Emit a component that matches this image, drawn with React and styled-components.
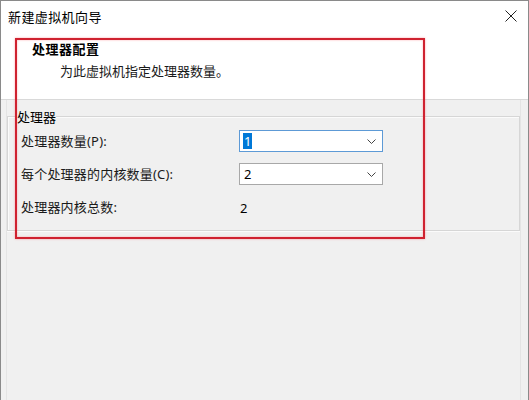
import React from 'react';
import styled, { createGlobalStyle, css } from 'styled-components';

const GlobalStyle = createGlobalStyle`
  html, body {
    margin: 0;
    padding: 0;
    background: #f0f0f0;
  }
  body {
    font-family: "Noto Sans", "Noto Sans CJK SC", sans-serif;
    font-size: 13px;
    color: #000;
  }
`;

const Window = styled.div`
  position: relative;
  height: 400px;
  box-sizing: border-box;
  border: 1px solid #8a8a8a;
  border-bottom: none;
  background: #f0f0f0;
  display: flex;
  flex-direction: column;
  overflow: hidden;
`;

const TitleBar = styled.div`
  height: 32px;
  background: #fff;
  display: flex;
  align-items: center;
  justify-content: space-between;
  padding: 0 11px 2px 7px;
  box-sizing: border-box;
`;

const Title = styled.span`
  font-family: "Noto Sans CJK SC", sans-serif;
  font-size: 13px;
  letter-spacing: 0.4px;
  line-height: 17px;
`;

const CloseButton = styled.button`
  border: none;
  background: transparent;
  padding: 0;
  width: 13px;
  height: 13px;
  display: flex;
  align-items: center;
  justify-content: center;
`;

const Header = styled.div`
  height: 67px;
  box-sizing: border-box;
  background: #fff;
  border-bottom: 1px solid #d9d9d9;
  padding: 7px 0 0 31px;
`;

const HeaderTitle = styled.div`
  font-family: "Noto Sans CJK SC", sans-serif;
  font-weight: 700;
  font-size: 13px;
  line-height: 17px;
  letter-spacing: 0.5px;
`;

const HeaderText = styled.div`
  font-family: "Noto Sans CJK SC", sans-serif;
  font-size: 13px;
  line-height: 17px;
  margin: 5px 0 0 28px;
  color: #1a1a1a;
`;

const Body = styled.div`
  flex: 1;
  margin: 0 7px 0 5px;
  padding-top: 8px;
  border-left: 1px solid #e4e4e4;
  border-right: 1px solid #e4e4e4;
`;

const GroupBox = styled.fieldset`
  margin: 0;
  padding: 5px 0 12px 13px;
  border: 1px solid #d6d6d6;
  box-shadow: inset 1px 1px 0 #fbfbfb, 0 1px 0 #fbfbfb;
  min-width: 0;
`;

const Legend = styled.legend`
  padding: 0;
  margin-left: -4px;
  font-family: "Noto Sans CJK SC", sans-serif;
  font-size: 13px;
  line-height: 17px;
  background: #f0f0f0;
`;

const Grid = styled.div`
  display: grid;
  grid-template-columns: 218px 144px;
  grid-auto-rows: 22px;
  row-gap: 11px;
  align-items: center;
`;

const Label = styled.span`
  font-size: 13px;
  line-height: 17px;
  letter-spacing: 0.2px;
  color: #1a1a1a;
`;

const Value = styled.span`
  font-size: 13px;
  line-height: 17px;
  padding-left: 1px;
  margin-top: 2px;
`;

const Combo = styled.div`
  height: 22px;
  box-sizing: border-box;
  background: #fff;
  border: 1px solid ${p => (p.$focused ? '#5d9ad6' : '#a8a8a8')};
  display: flex;
  align-items: center;
  justify-content: space-between;
  padding: 0 6px 0 3px;
`;

const ComboText = styled.span`
  font-size: 13px;
  line-height: 16px;
  padding: 0 1px;
  ${p => p.$selected && css`
    background: #0078d7;
    color: #fff;
  `}
`;

const Highlight = styled.div`
  position: absolute;
  left: 14px;
  top: 37px;
  width: 410px;
  height: 201px;
  box-sizing: border-box;
  border: 2px solid #cf2230;
  box-shadow: 0 0 2px rgba(255, 80, 90, 0.5), inset 0 0 2px rgba(255, 80, 90, 0.5);
  pointer-events: none;
`;

const Chevron = () => (
  <svg width="9" height="5" viewBox="0 0 9 5">
    <path d="M0.5 0.5 L4.5 4.5 L8.5 0.5" fill="none" stroke="#444" strokeWidth="1" />
  </svg>
);

const CloseIcon = () => (
  <svg width="12" height="12" viewBox="0 0 12 12">
    <path d="M0.5 0.5 L11.5 11.5 M11.5 0.5 L0.5 11.5" stroke="#222" strokeWidth="1" />
  </svg>
);

export default function App() {
  return (
    <>
      <GlobalStyle />
      <Window>
        <TitleBar>
          <Title>新建虚拟机向导</Title>
          <CloseButton aria-label="关闭"><CloseIcon /></CloseButton>
        </TitleBar>
        <Header>
          <HeaderTitle>处理器配置</HeaderTitle>
          <HeaderText>为此虚拟机指定处理器数量。</HeaderText>
        </Header>
        <Body>
          <GroupBox>
            <Legend>处理器</Legend>
            <Grid>
              <Label>处理器数量(P):</Label>
              <Combo $focused>
                <ComboText $selected>1</ComboText>
                <Chevron />
              </Combo>
              <Label>每个处理器的内核数量(C):</Label>
              <Combo>
                <ComboText>2</ComboText>
                <Chevron />
              </Combo>
              <Label>处理器内核总数:</Label>
              <Value>2</Value>
            </Grid>
          </GroupBox>
        </Body>
        <Highlight />
      </Window>
    </>
  );
}
